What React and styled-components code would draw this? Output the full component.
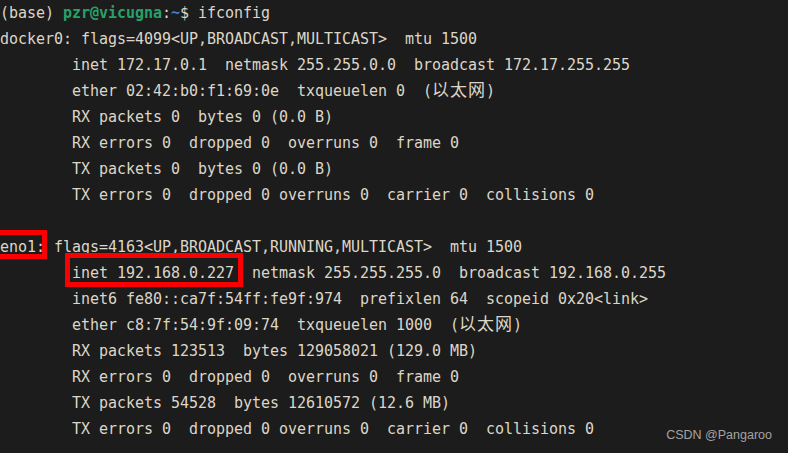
import React from "react";
import styled, { createGlobalStyle } from "styled-components";

const GlobalStyle = createGlobalStyle`
  html, body {
    margin: 0;
    padding: 0;
    background: #1c1c1c;
  }
`;

// terminal window

const Terminal = styled.div`
  position: relative;
  width: 788px;
  height: 453px;
  overflow: hidden;
  background: #1c1c1c;
  color: #dcd6c8;
  font-family: "DejaVu Sans Mono", "Liberation Mono", monospace;
  font-size: 15px;
  letter-spacing: -0.03px;
  line-height: 26px;
  white-space: pre;
`;

const Line = styled.div`
  height: 26px;
`;

const User = styled.span`
  color: #26a269;
  font-weight: bold;
`;

const Path = styled.span`
  color: #3b7fd0;
  font-weight: bold;
`;

const Cjk = styled.span`
  font-family: "Noto Sans CJK SC", sans-serif;
  font-size: 17px;
  line-height: 16px;
  letter-spacing: 1px;
`;

// red boxes drawn over the screenshot

const Marked = styled.span`
  position: relative;
  display: inline-block;
  height: 26px;
  &::after {
    content: "";
    position: absolute;
    top: ${(p) => p.top}px;
    bottom: ${(p) => p.bottom}px;
    left: ${(p) => p.left}px;
    right: ${(p) => p.right}px;
    border: ${(p) => p.weight}px solid #fa0000;
  }
`;

const Watermark = styled.div`
  position: absolute;
  right: 16px;
  bottom: 10px;
  font-family: "Liberation Sans", Arial, sans-serif;
  font-size: 12.5px;
  letter-spacing: 0;
  line-height: 16px;
  color: #a3a3a3;
`;

const ind = "        ";

export default function App() {
  return (
    <>
      <GlobalStyle />
      <Terminal>
        <Line>
          (base) <User>pzr@vicugna</User>:<Path>~</Path>$ ifconfig
        </Line>
        <Line>docker0: flags=4099&lt;UP,BROADCAST,MULTICAST&gt;  mtu 1500</Line>
        <Line>{ind}inet 172.17.0.1  netmask 255.255.0.0  broadcast 172.17.255.255</Line>
        <Line>
          {ind}ether 02:42:b0:f1:69:0e  txqueuelen 0  (<Cjk>以太网</Cjk>)
        </Line>
        <Line>{ind}RX packets 0  bytes 0 (0.0 B)</Line>
        <Line>{ind}RX errors 0  dropped 0  overruns 0  frame 0</Line>
        <Line>{ind}TX packets 0  bytes 0 (0.0 B)</Line>
        <Line>{ind}TX errors 0  dropped 0 overruns 0  carrier 0  collisions 0</Line>
        <Line />
        <Line>
          <Marked top={-4} bottom={1} left={-10} right={-2} weight={5}>
            eno1:
          </Marked>{" "}
          flags=4163&lt;UP,BROADCAST,RUNNING,MULTICAST&gt;  mtu 1500
        </Line>
        <Line>
          {ind}
          <Marked top={-7} bottom={-1} left={-7} right={-9} weight={5}>
            inet 192.168.0.227
          </Marked>
          {"  netmask 255.255.255.0  broadcast 192.168.0.255"}
        </Line>
        <Line>{ind}inet6 fe80::ca7f:54ff:fe9f:974  prefixlen 64  scopeid 0x20&lt;link&gt;</Line>
        <Line>
          {ind}ether c8:7f:54:9f:09:74  txqueuelen 1000  (<Cjk>以太网</Cjk>)
        </Line>
        <Line>{ind}RX packets 123513  bytes 129058021 (129.0 MB)</Line>
        <Line>{ind}RX errors 0  dropped 0  overruns 0  frame 0</Line>
        <Line>{ind}TX packets 54528  bytes 12610572 (12.6 MB)</Line>
        <Line>{ind}TX errors 0  dropped 0 overruns 0  carrier 0  collisions 0</Line>
        <Watermark>CSDN @Pangaroo</Watermark>
      </Terminal>
    </>
  );
}
